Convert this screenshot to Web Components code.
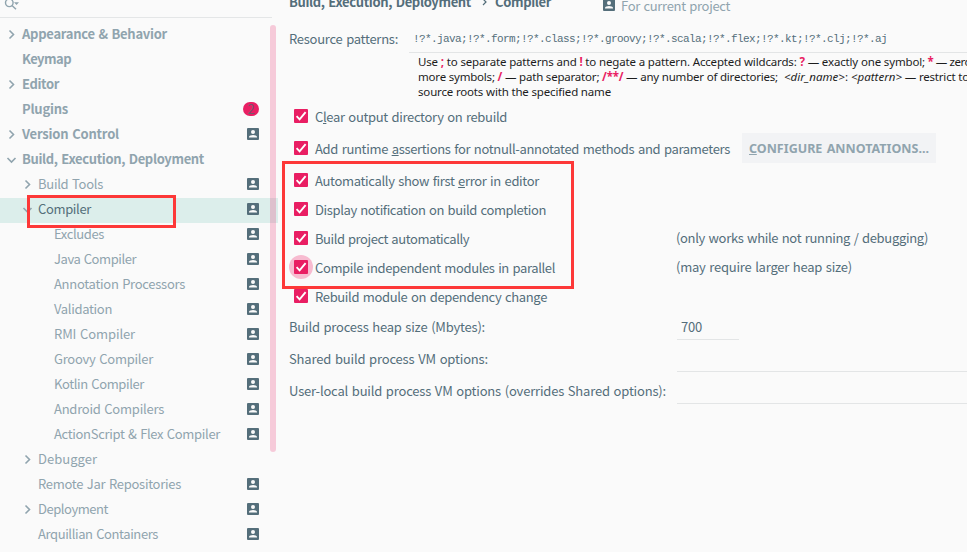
<!DOCTYPE html>
<html lang="en">
<head>
<meta charset="utf-8">
<title>Settings</title>
<style>
html,body{margin:0;width:967px;height:552px;overflow:hidden;background:#fafafa}
</style>
</head>
<body>
<settings-window></settings-window>
<script>
class Base extends HTMLElement{
  view(html){this.attachShadow({mode:'open'}).innerHTML=html;}
}

/* A run of text spaced out to the width in its "w" attribute. */
class FitText extends Base{
  connectedCallback(){
    this.view('<style>:host{display:inline-block;white-space:pre;flex:none}</style><slot></slot>');
    requestAnimationFrame(()=>this.fit());
    this.fit();
  }
  fit(){
    const w=+this.getAttribute('w');
    if(!w)return;
    this.style.letterSpacing='0px';
    const nat=this.getBoundingClientRect().width;
    if(nat)this.style.letterSpacing=((w-nat)/this.textContent.length).toFixed(4)+'px';
  }
}

class ProjectIcon extends Base{
  connectedCallback(){
    this.view(`<style>:host{display:block;width:12px;height:12px;flex:none}svg{display:block}</style>
<svg width="12" height="12" viewBox="0 0 12 12"><rect width="12" height="12" rx="1" fill="#546e7a"/><circle cx="6" cy="4" r="2" fill="#fafafa"/><path d="M2 9.6V8.9C2 7.7 4.4 7 6 7s4 .7 4 1.9v.7z" fill="#fafafa"/></svg>`);
  }
}

class TreeRow extends Base{
  connectedCallback(){
    const a=n=>this.getAttribute(n),lvl=+a('level')||0,ar=a('arrow');
    const d=ar==='down'?'M1.5 4l4 4 4-4':'M3.5 1.5l4 4-4 4';
    this.view(`<style>
:host{display:flex;align-items:center;height:25px;box-sizing:border-box;padding:0 19px 3px ${6+lvl*16}px;color:#90a4ae;font-weight:${lvl?400:700}}
:host([selected]){background:#dceeeb;color:#546e7a}
.a{width:16px;height:11px;flex:none}.a svg{display:block}
.t{flex:1}
.n{width:16px;height:14px;border-radius:8px;background:#e91e63;color:#74586b;font:400 13px/14px "Noto Sans CJK SC",sans-serif;text-align:center}
</style><div class="a">${ar?`<svg width="12" height="11" fill="none" stroke="#90a4ae" stroke-width="1.6"><path d="${d}"/></svg>`:''}</div>
<div class="t"><fit-text w="${a('w')}">${this.textContent.replace('&','&amp;')}</fit-text></div>
${a('badge')?`<div class="n">${a('badge')}</div>`:''}${this.hasAttribute('project')?'<project-icon></project-icon>':''}`);
  }
}

class SettingsTree extends Base{
  connectedCallback(){
    this.view(`<style>
:host{display:block;position:relative;width:278px;height:552px;overflow:hidden;flex:none}
.s{height:17px;width:272px;border-bottom:1px solid #e4e6e7}
.s svg{display:block}
.l{padding-top:5px}
.bar{position:absolute;left:270px;top:25px;width:6px;height:427px;border-radius:3px;background:#e91e6338}
.mark{position:absolute;left:27px;top:195px;width:149px;height:33px;box-sizing:border-box;border:3px solid #fd3838}
</style>
<div class="s"><svg width="24" height="12" fill="none" stroke="#90a4ae" stroke-width="1.4"><circle cx="9.3" cy="2.8" r="3.8"/><path d="M12 5.5l4 3.8"/><path d="M14 2.3h5l-2.5 2.8z" fill="#90a4ae" stroke="none"/></svg></div>
<div class="l">
<tree-row w="145" arrow="right">Appearance & Behavior</tree-row>
<tree-row w="49">Keymap</tree-row>
<tree-row w="37" arrow="right">Editor</tree-row>
<tree-row w="46" badge="2">Plugins</tree-row>
<tree-row w="97" arrow="right" project>Version Control</tree-row>
<tree-row w="182" arrow="down">Build, Execution, Deployment</tree-row>
<tree-row w="65" level="1" arrow="right" project>Build Tools</tree-row>
<tree-row w="53" level="1" arrow="down" project selected>Compiler</tree-row>
<tree-row w="50" level="2" project>Excludes</tree-row>
<tree-row w="82" level="2" project>Java Compiler</tree-row>
<tree-row w="131" level="2" project>Annotation Processors</tree-row>
<tree-row w="58" level="2" project>Validation</tree-row>
<tree-row w="81" level="2" project>RMI Compiler</tree-row>
<tree-row w="99" level="2" project>Groovy Compiler</tree-row>
<tree-row w="90" level="2" project>Kotlin Compiler</tree-row>
<tree-row w="110" level="2" project>Android Compilers</tree-row>
<tree-row w="166" level="2" project>ActionScript & Flex Compiler</tree-row>
<tree-row w="59" level="1" arrow="right">Debugger</tree-row>
<tree-row w="143" level="1" project>Remote Jar Repositories</tree-row>
<tree-row w="70" level="1" arrow="right" project>Deployment</tree-row>
<tree-row w="120" level="1" project>Arquillian Containers</tree-row>
</div><div class="bar"></div><div class="mark"></div>`);
  }
}

class CheckRow extends Base{
  connectedCallback(){
    this.view(`<style>
:host{display:flex;align-items:center;height:28px;margin-bottom:1px;padding-left:5px}
:host([tall]){height:32px;margin:0}
.b{width:14px;height:14px;background:#e91e63;border-radius:1px;flex:none;margin-right:7px}
:host([focused]) .b{position:relative}
:host([focused]) .b::before{content:"";position:absolute;left:-5px;top:-5px;width:24px;height:24px;border-radius:50%;background:#f7bbd0;z-index:-1}
:host([focused]){position:relative;z-index:0}
svg{display:block}
.t{width:361px;padding-top:1px;flex:none}
:host([tall]) .t{width:427px}
</style><div class="b"><svg width="14" height="14" fill="none" stroke="#fff" stroke-width="1.9"><path d="M2.6 7.2l3 3.1 6-7.1"/></svg></div>
<div class="t"><slot></slot></div><slot name="side"></slot>`);
  }
}

class PushButton extends Base{
  connectedCallback(){
    this.view(`<style>:host{display:flex;align-items:center;width:187px;height:30px;padding-left:7px;background:#f2f3f5;color:#90a4ae;font:700 12.5px/18px "Noto Sans",sans-serif}::slotted(*){margin-top:2px}</style><slot></slot>`);
  }
}

class FieldRow extends Base{
  connectedCallback(){
    this.view(`<style>
:host{display:flex;height:32px;flex:none}
.l{width:388px;padding-top:9px;flex:none}
.f{width:286px;padding:9px 0 0 4px;box-sizing:border-box;border-bottom:1px solid #e3e5e6;flex:1}
:host([short]){height:29px}:host([short]) .l,:host([short]) .f{padding-top:6px}
:host([short]) .f{flex:none;width:62px}
</style><div class="l"><slot></slot></div><div class="f"><slot name="value"></slot></div>`);
  }
}

class CompilerPage extends Base{
  connectedCallback(){
    this.view(`<style>
:host{display:flex;flex-direction:column;position:relative;width:678px;height:552px;padding-left:11px;overflow:hidden;flex:none;color:#546e7a;word-spacing:1px}
.h{display:flex;align-items:center;height:26px;margin-top:-11px;flex:none;font-weight:700}
.h svg{margin:0 8px 0 11px}.h project-icon{margin:6px 6px 0 52px}
.h .p{font-weight:400;color:#90a4ae;margin-top:8px}
.r{display:flex;height:29px;margin-top:9px;flex:none;line-height:29px}
.r .k{width:120px;flex:none}
.r .v{flex:1;height:28px;border-bottom:1px solid #e3e5e6;padding-left:4px;font:11px/30px "Liberation Mono",monospace}
.hint{margin:1px 0 1px 129px;height:45px;flex:none;white-space:pre;color:#1d1d1d;word-spacing:0;font:11.5px/15px "Noto Sans",sans-serif}
.hint div{height:15px}
b{color:#e91e63}
.gap{height:2px;flex:none}
.mark{position:absolute;left:4px;top:161px;width:292px;height:128px;box-sizing:border-box;border:3px solid #fd3838;z-index:2}
</style>
<div class="h"><fit-text w="182">Build, Execution, Deployment</fit-text><svg width="5" height="8" fill="none" stroke="#546e7a" stroke-width="1.2"><path d="M1 1l3 3-3 3"/></svg><fit-text w="56">Compiler</fit-text><project-icon></project-icon><fit-text class="p" w="109">For current project</fit-text></div>
<div class="r"><div class="k"><fit-text w="109">Resource patterns:</fit-text></div><div class="v"><fit-text w="474">!?*.java;!?*.form;!?*.class;!?*.groovy;!?*.scala;!?*.flex;!?*.kt;!?*.clj;!?*.aj</fit-text></div></div>
<div class="hint"><div><fit-text w="507">Use <b>;</b> to separate patterns and <b>!</b> to negate a pattern. Accepted wildcards: <b>?</b> — exactly one symbol;</fit-text><fit-text w="46"> <b>*</b> — zero</fit-text></div><div><fit-text w="360">more symbols; <b>/</b> — path separator; <b>/**/</b> — any number of directories;</fit-text><fit-text w="124">  <i>&lt;dir_name&gt;</i>: <i>&lt;pattern&gt;</i></fit-text><fit-text w="67"> — restrict to</fit-text></div><div><fit-text w="193">source roots with the specified name</fit-text></div></div>
<check-row tall><fit-text w="192">C<u>l</u>ear output directory on rebuild</fit-text></check-row>
<check-row tall><fit-text w="415">Add runtime <u>a</u>ssertions for notnull-annotated methods and parameters</fit-text><push-button slot="side"><fit-text w="180"><u>C</u>ONFIGURE ANNOTATIONS...</fit-text></push-button></check-row>
<div class="gap"></div>
<check-row><fit-text w="224">Automatically show first <u>e</u>rror in editor</fit-text></check-row>
<check-row><fit-text w="231">Display notification on build completion</fit-text></check-row>
<check-row><fit-text w="154">Build project automatically</fit-text><fit-text slot="side" w="252">(only works while not running / debugging)</fit-text></check-row>
<check-row focused><fit-text w="240">Compile independent modules in parallel</fit-text><fit-text slot="side" w="176">(may require larger heap size)</fit-text></check-row>
<check-row><fit-text w="232">Rebuild module on dependency change</fit-text></check-row>
<field-row short><fit-text w="196">Build process heap size (Mbytes):</fit-text><fit-text slot="value" w="21">700</fit-text></field-row>
<field-row><fit-text w="199">Shared build process VM options:</fit-text></field-row>
<field-row><fit-text w="377">User-local build process VM options (overrides Shared options):</fit-text></field-row>
<div class="mark"></div>`);
  }
}

class SettingsWindow extends Base{
  connectedCallback(){
    this.view(`<style>:host{display:flex;width:967px;height:552px;overflow:hidden;background:#fafafa;font:13px/20px "Noto Sans CJK SC",sans-serif;word-spacing:1px}</style><settings-tree></settings-tree><compiler-page></compiler-page>`);
  }
}

customElements.define('project-icon',ProjectIcon);
customElements.define('tree-row',TreeRow);
customElements.define('settings-tree',SettingsTree);
customElements.define('check-row',CheckRow);
customElements.define('push-button',PushButton);
customElements.define('field-row',FieldRow);
customElements.define('compiler-page',CompilerPage);
customElements.define('settings-window',SettingsWindow);
customElements.define('fit-text',FitText);
</script>
</body>
</html>
